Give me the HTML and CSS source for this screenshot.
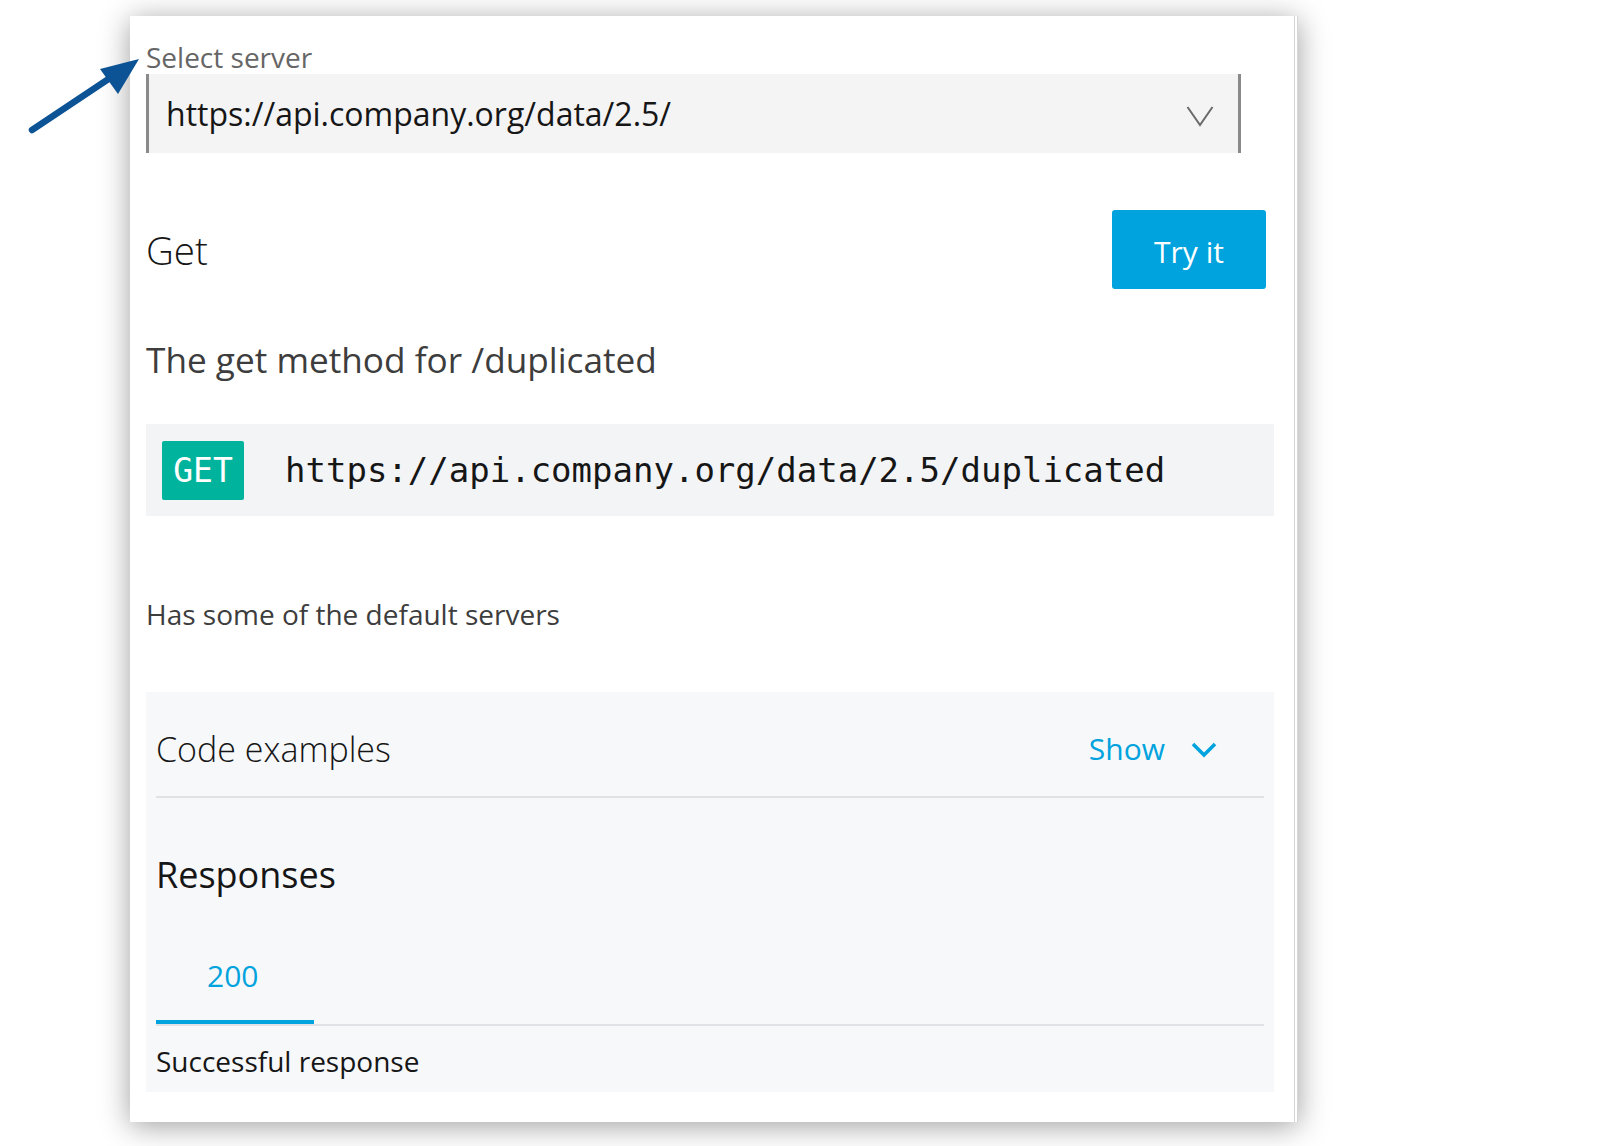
FILE: index.html
```html
<!DOCTYPE html>
<html lang="en">
<head>
<meta charset="utf-8">
<title>Operation</title>
<link rel="stylesheet" href="styles.css">
</head>
<body>
<div class="page">
  <svg class="pointer" width="160" height="150" viewBox="0 0 160 150" aria-hidden="true">
    <line x1="32" y1="130" x2="113" y2="76" stroke="#0b5394" stroke-width="6.5" stroke-linecap="round"/>
    <polygon points="139,59 100,69 118,94" fill="#0b5394"/>
  </svg>
  <div class="card">
    <label class="field-label">Select server</label>
    <div class="select">
      <span class="select-value">https://api.company.org/data/2.5/</span>
      <svg class="select-caret" width="28" height="22" viewBox="0 0 28 22" aria-hidden="true">
        <polyline points="1.5,2 14,20 26.5,2" fill="none" stroke="#6a6a6a" stroke-width="2"/>
      </svg>
    </div>

    <div class="op-header">
      <h1 class="op-title">Get</h1>
      <button class="try-btn">Try it</button>
    </div>

    <p class="op-summary">The get method for /duplicated</p>

    <div class="endpoint">
      <span class="method">GET</span>
      <span class="endpoint-url">https://api.company.org/data/2.5/duplicated</span>
    </div>

    <p class="op-desc">Has some of the default servers</p>

    <div class="panel">
      <div class="code-row">
        <span class="code-title">Code examples</span>
        <span class="show-toggle">Show
          <svg class="show-caret" width="28" height="18" viewBox="0 0 28 18" aria-hidden="true">
            <polyline points="3,3 14,14 25,3" fill="none" stroke="#00a3dd" stroke-width="3.6"/>
          </svg>
        </span>
      </div>
      <h2 class="responses-title">Responses</h2>
      <div class="tabs">
        <span class="tab tab-active">200</span>
      </div>
      <p class="response-text">Successful response</p>
    </div>
  </div>
</div>
</body>
</html>
```

FILE: styles.css
```css
html, body {
  margin: 0;
  padding: 0;
  background: #ffffff;
}

body {
  font-family: "Open Sans", "Noto Sans", sans-serif;
  color: #161616;
}

.page {
  position: relative;
  padding-top: 16px;
  padding-left: 130px;
  height: 1130px;
}

.pointer {
  position: absolute;
  left: 0;
  top: 0;
  z-index: 2;
}

.card {
  box-sizing: border-box;
  width: 1168px;
  height: 1106px;
  padding: 27px 20px 0 16px;
  background: #ffffff;
  border-right: 4px double #d6d6d6;
  box-shadow: 0 4px 28px rgba(0, 0, 0, 0.38);
}

.field-label {
  display: block;
  font-size: 28px;
  line-height: 28px;
  color: #666666;
}

.select {
  box-sizing: border-box;
  margin-top: 3px;
  width: 1095px;
  height: 79px;
  display: flex;
  align-items: center;
  justify-content: space-between;
  padding: 0 24px 0 17px;
  background: #f4f4f4;
  border-left: 3px solid #8a8a8a;
  border-right: 3px solid #8a8a8a;
}

.select-value {
  font-size: 32px;
  color: #161616;
}

.select-caret {
  display: block;
  margin-top: 5px;
}

.op-header {
  margin-top: 57px;
  margin-right: 8px;
  display: flex;
  align-items: center;
  justify-content: space-between;
}

.op-title {
  margin: 0;
  font-size: 38.5px;
  font-weight: 300;
  color: #161616;
}

.try-btn {
  box-sizing: border-box;
  width: 154px;
  height: 79px;
  border: 0;
  border-radius: 3px;
  background: #00a3dd;
  color: #ffffff;
  font-family: "Open Sans", "Noto Sans", sans-serif;
  font-size: 30px;
  padding: 4px 0 0;
}

.op-summary {
  margin: 53px 0 0;
  font-size: 35.2px;
  line-height: 35px;
  color: #3d3d3d;
}

.endpoint {
  box-sizing: border-box;
  margin-top: 47px;
  height: 92px;
  padding: 16px;
  display: flex;
  align-items: center;
  gap: 41px;
  background: #f3f4f6;
}

.method {
  box-sizing: border-box;
  width: 82px;
  height: 59px;
  display: flex;
  align-items: center;
  justify-content: center;
  background: #00b39c;
  color: #ffffff;
  font-family: "DejaVu Sans Mono", "Liberation Mono", monospace;
  font-size: 33px;
  border-radius: 2px;
}

.endpoint-url {
  font-family: "DejaVu Sans Mono", "Liberation Mono", monospace;
  font-size: 34px;
  color: #161616;
}

.op-desc {
  margin: 84px 0 0;
  font-size: 28px;
  line-height: 28px;
  color: #3d3d3d;
}

.panel {
  margin-top: 64px;
  padding: 0 10px 17px;
  background: #f7f8fa;
}

.code-row {
  display: flex;
  align-items: center;
  justify-content: space-between;
  padding: 37px 0 27px;
  border-bottom: 2px solid #e0e2e6;
}

.code-title {
  font-size: 34px;
  font-weight: 300;
  line-height: 40px;
  color: #161616;
}

.show-toggle {
  display: flex;
  align-items: center;
  gap: 25px;
  margin-right: 46px;
  font-size: 30px;
  line-height: 40px;
  color: #00a3dd;
}

.show-caret {
  display: block;
  margin-top: 2px;
}

.responses-title {
  margin: 59px 0 0;
  font-size: 36px;
  line-height: 35px;
  font-weight: 400;
  color: #161616;
}

.tabs {
  margin-top: 49px;
  display: flex;
  border-bottom: 2px solid #e0e2e6;
}

.tab {
  display: block;
  padding: 20px 56px 29px 51px;
  font-size: 30px;
  line-height: 30px;
}

.tab-active {
  color: #00a3dd;
  border-bottom: 4px solid #00a3dd;
}

.response-text {
  margin: 21px 0 0;
  font-size: 28px;
  line-height: 28px;
  color: #161616;
}
```
